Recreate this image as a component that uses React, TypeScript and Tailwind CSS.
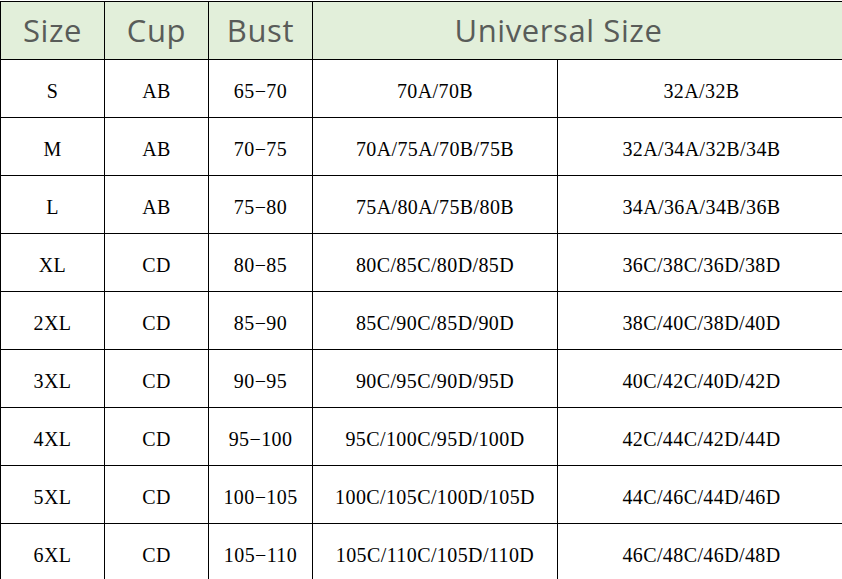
const headers = ["Size", "Cup", "Bust", "Universal Size"];

const rows = [
  ["S", "AB", "65−70", "70A/70B", "32A/32B"],
  ["M", "AB", "70−75", "70A/75A/70B/75B", "32A/34A/32B/34B"],
  ["L", "AB", "75−80", "75A/80A/75B/80B", "34A/36A/34B/36B"],
  ["XL", "CD", "80−85", "80C/85C/80D/85D", "36C/38C/36D/38D"],
  ["2XL", "CD", "85−90", "85C/90C/85D/90D", "38C/40C/38D/40D"],
  ["3XL", "CD", "90−95", "90C/95C/90D/95D", "40C/42C/40D/42D"],
  ["4XL", "CD", "95−100", "95C/100C/95D/100D", "42C/44C/42D/44D"],
  ["5XL", "CD", "100−105", "100C/105C/100D/105D", "44C/46C/44D/46D"],
  ["6XL", "CD", "105−110", "105C/110C/105D/110D", "46C/48C/46D/48D"],
];

export default function App() {
  return (
    <div className="w-[842px] h-[579px] overflow-hidden bg-white pt-px">
      <div className="w-[846px] border-t border-l border-black">
        <div className="grid grid-cols-[104px_104px_104px_245px_1fr] bg-[#e2efda]">
          {headers.map((h, i) => (
            <div
              key={h}
              className={`h-[58px] flex items-center justify-center border-b border-black text-[31px] tracking-[0.6px] text-[#595c59] font-['Open_Sans',sans-serif] ${
                i < 3 ? "border-r" : "col-span-2 pr-[42px]"
              }`}
            >
              {h}
            </div>
          ))}
        </div>
        {rows.map((r, idx) => (
          <div
            key={idx}
            className="grid grid-cols-[104px_104px_104px_245px_1fr] text-black text-[20px] tracking-[0.4px] font-['Liberation_Serif',serif]"
          >
            {r.map((c, j) => (
              <div
                key={j}
                className="h-[58px] flex items-center justify-center pt-[5px] border-r border-b border-black"
              >
                {c}
              </div>
            ))}
          </div>
        ))}
      </div>
    </div>
  );
}
